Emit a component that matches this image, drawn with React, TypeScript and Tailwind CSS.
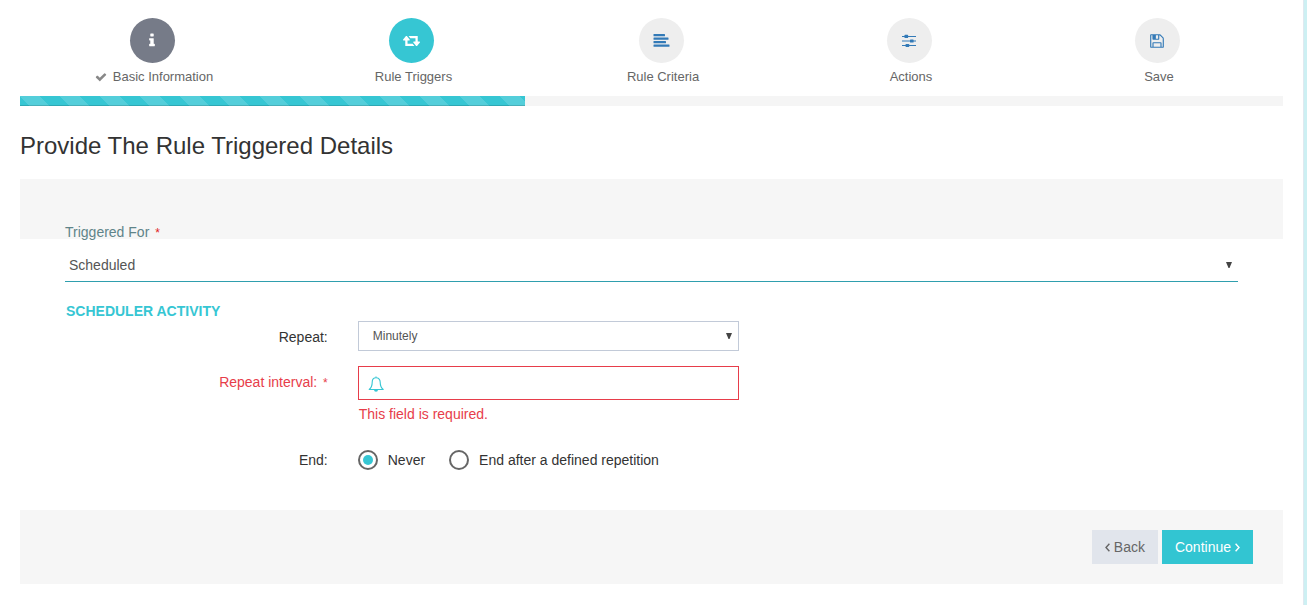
import { useState } from "react";
import type { ReactNode } from "react";

function Glyph({ d, className, box = "0 0 1792 1792" }: { d: string; className: string; box?: string }) {
  return (
    <svg viewBox={box} fill="currentColor" aria-hidden="true" className={className}>
      <path d={d} />
    </svg>
  );
}

const INFO =
  "M1216 1344v128q0 26-19 45t-45 19h-512q-26 0-45-19t-19-45v-128q0-26 19-45t45-19h64v-384h-64q-26 0-45-19t-19-45v-128q0-26 19-45t45-19h384q26 0 45 19t19 45v576h64q26 0 45 19t19 45zm-128-1152v192q0 26-19 45t-45 19h-256q-26 0-45-19t-19-45v-192q0-26 19-45t45-19h256q26 0 45 19t19 45z";
const RETWEET =
  "M1280 1504q0 13-9.5 22.5t-22.5 9.5h-960q-8 0-13.5-2t-9-7-5.5-8-3-11.5-1-11.5v-600h-192q-26 0-45-19t-19-45q0-24 15-41l320-384q19-22 49-22t49 22l320 384q15 17 15 41 0 26-19 45t-45 19h-192v384h576q16 0 25 11l160 192q7 11 7 21zm640-416q0 24-15 41l-320 384q-20 23-49 23t-49-23l-320-384q-15-17-15-41 0-26 19-45t45-19h192v-384h-576q-16 0-25-12l-160-192q-7-9-7-20 0-13 9.5-22.5t22.5-9.5h960q8 0 13.5 2t9 7 5.5 8 3 11.5 1 11.5v600h192q26 0 45 19t19 45z";
const FLOPPY =
  "M512 1536h768v-384h-768v384zm896 0h128v-896q0-14-10-38.5t-20-34.5l-281-281q-10-10-34-20t-39-10v416q0 40-28 68t-68 28h-576q-40 0-68-28t-28-68v-416h-128v1280h128v-416q0-40 28-68t68-28h832q40 0 68 28t28 68v416zm-384-928v-320q0-13-9.5-22.5t-22.5-9.5h-192q-13 0-22.5 9.5t-9.5 22.5v320q0 13 9.5 22.5t22.5 9.5h192q13 0 22.5-9.5t9.5-22.5zm640 32v928q0 40-28 68t-68 28h-1344q-40 0-68-28t-28-68v-1344q0-40 28-68t68-28h928q40 0 88 20t76 48l280 280q28 28 48 76t20 88z";
const CHECK =
  "M1671 566q0 40-28 68l-724 724-136 136q-28 28-68 28t-68-28l-136-136-362-362q-28-28-28-68t28-68l136-136q28-28 68-28t68 28l294 295 656-657q28-28 68-28t68 28l136 136q28 28 28 68z";

function AngleIcon({ d }: { d: string }) {
  return (
    <svg viewBox="0 0 5 9" fill="none" stroke="currentColor" strokeWidth="1.4" aria-hidden="true" className="h-[9px] w-[5px]">
      <path d={d} />
    </svg>
  );
}

function LinesIcon() {
  return (
    <svg viewBox="0 0 17 14" fill="currentColor" aria-hidden="true" className="h-3.5 w-[17px]">
      <rect x="0.5" y="0" width="11.5" height="2.3" rx="0.5" />
      <rect x="0.5" y="3.5" width="15" height="2.3" rx="0.5" />
      <rect x="0.5" y="7" width="12.5" height="2.3" rx="0.5" />
      <rect x="0.5" y="10.500" width="16" height="2.3" rx="0.5" />
    </svg>
  );
}

function EqualizerIcon() {
  return (
    <svg viewBox="0 0 14 14" fill="currentColor" aria-hidden="true" className="size-3.5">
      <rect x="0" y="2" width="14" height="1" />
      <rect x="0" y="6.500" width="14" height="1" />
      <rect x="0" y="11" width="14" height="1" />
      <rect x="2.500" y="0.800" width="3.600" height="3.200" rx="0.6" />
      <rect x="8" y="5.400" width="3.600" height="3.200" rx="0.6" />
      <rect x="3.600" y="9.900" width="3.600" height="3.200" rx="0.6" />
    </svg>
  );
}

function BellIcon() {
  return (
    <svg viewBox="0 0 16 17" fill="none" stroke="currentColor" aria-hidden="true" className="h-[17px] w-4">
      <path d="M8 0.5v1.3M8 1.8C5.400 1.800 4.200 3.600 4.200 6.200 4.200 10 3.200 11.800 1.200 13.500h14C13.200 11.800 12.200 10 12.200 6.200 12.200 3.600 10.800 1.800 8 1.800Z" strokeWidth="1.1" strokeLinejoin="round" />
      <path d="M6 13.800a2 2 0 0 0 4 0Z" fill="currentColor" stroke="none" />
    </svg>
  );
}

type Step = { label: string; icon: ReactNode; circle: string; done?: boolean };

const steps: Step[] = [
  { label: "Basic Information", icon: <Glyph d={INFO} box="0 64 1792 1792" className="size-4" />, circle: "bg-[#767b88] text-white", done: true },
  { label: "Rule Triggers", icon: <Glyph d={RETWEET} box="0 64 1920 1792" className="h-4 w-[17px]" />, circle: "bg-[#36c6d3] text-white" },
  { label: "Rule Criteria", icon: <LinesIcon />, circle: "bg-[#eeeeee] text-[#337ab7]" },
  { label: "Actions", icon: <EqualizerIcon />, circle: "bg-[#eeeeee] text-[#337ab7]" },
  { label: "Save", icon: <Glyph d={FLOPPY} className="size-4" />, circle: "bg-[#eeeeee] text-[#337ab7]" },
];

function Arrow({ className }: { className: string }) {
  return (
    <svg viewBox="0 0 6 6" fill="#444444" aria-hidden="true" className={`pointer-events-none absolute size-1.5 ${className}`}>
      <path d="M0 0h6L3.500 6h-1Z" />
    </svg>
  );
}

const radio =
  "m-0 grid size-5 shrink-0 appearance-none place-content-center rounded-full border-2 border-[#666666] before:size-2.5 before:rounded-full before:content-[''] checked:before:bg-[#36c6d3]";

export default function App() {
  const [end, setEnd] = useState("never");
  return (
    <div className="flex min-h-screen bg-white font-['Liberation_Sans',Arial,sans-serif] text-sm text-[#333333]">
      <main className="min-w-0 flex-1 pt-[18px] pr-5 pb-5 pl-5">
        <nav aria-label="Progress">
          <ol className="grid grid-cols-[268fr_251fr_248fr_248fr_248fr]">
            {steps.map((s) => (
              <li key={s.label}>
                <a href="#" className="flex flex-col items-center text-[13px] text-[#666666]">
                  <span className={`mr-1 flex size-[45px] items-center justify-center rounded-full ${s.circle}`}>{s.icon}</span>
                  <span className="mt-1 flex items-center gap-1.5 leading-5">
                    {s.done && <Glyph d={CHECK} className="size-3 text-[#888888]" />}
                    {s.label}
                  </span>
                </a>
              </li>
            ))}
          </ol>
        </nav>
        <div role="progressbar" aria-valuenow={40} aria-valuemin={0} aria-valuemax={100} aria-label="Wizard progress" className="mt-[9px] h-2.5 bg-[#f5f5f5]">
          <div className="h-full w-2/5 bg-[#36c6d3] bg-[linear-gradient(45deg,rgba(255,255,255,.15)_25%,transparent_25%,transparent_50%,rgba(255,255,255,.15)_50%,rgba(255,255,255,.15)_75%,transparent_75%,transparent)] bg-[length:40px_40px] shadow-[inset_0_-1px_0_rgba(0,0,0,0.15)]" />
        </div>

        <h1 className="mt-6 text-2xl leading-8">Provide The Rule Triggered Details</h1>

        <form className="mt-[17px]" onSubmit={(e) => e.preventDefault()}>
          <div className="flex h-[60px] items-end bg-[#f6f6f6] px-[45px]">
            <label htmlFor="triggered" className="leading-[10px] text-[#5f8489]">
              Triggered For <span className="ml-0.5 text-xs leading-none text-[#e02222]">*</span>
            </label>
          </div>

          <div className="px-[45px] pt-[9px]">
            <div className="relative">
              <select id="triggered" className="block h-[34px] w-full appearance-none border-b border-[#2f9fae] bg-white px-1 text-[#555555]">
                <option>Scheduled</option>
              </select>
              <Arrow className="top-3.5 right-1.5" />
            </div>

            <h2 className="mt-[19px] pl-px leading-5 font-bold text-[#36c6d3]">SCHEDULER ACTIVITY</h2>

            <div className="grid grid-cols-[22.4%_32.5%] gap-x-[30px] gap-y-[15px]">
              <label htmlFor="repeat" className="pt-1.5 text-right leading-5">Repeat:</label>
              <div className="relative">
                <select id="repeat" className="block h-[30px] w-full appearance-none border border-[#c2cad8] bg-white px-3.5 text-xs text-[#555555]">
                  <option>Minutely</option>
                </select>
                <Arrow className="top-3 right-[7px]" />
              </div>

              <label htmlFor="interval" className="pt-1.5 text-right leading-5 text-[#e73d4a]">
                Repeat interval: <span className="ml-0.5 text-xs">*</span>
              </label>
              <div>
                <div className="relative">
                  <input id="interval" type="text" aria-invalid="true" aria-describedby="interval-error" className="block h-[34px] w-full border border-[#e73d4a] bg-white pr-3 pl-[33px] text-[#555555]" />
                  <span className="pointer-events-none absolute top-2.5 left-2.5 text-[#36c6d3]">
                    <BellIcon />
                  </span>
                </div>
                <p id="interval-error" className="mt-1 pl-px leading-5 text-[#e73d4a]">This field is required.</p>
              </div>
            </div>

            <div role="radiogroup" aria-labelledby="end-label" className="mt-[26px] grid grid-cols-[22.4%_1fr] gap-x-[30px] leading-5">
              <span id="end-label" className="text-right">End:</span>
              <div className="flex items-center gap-6">
                <label className="flex items-center gap-2.5">
                  <input type="radio" name="end" checked={end === "never"} onChange={() => setEnd("never")} className={radio} />
                  Never
                </label>
                <label className="flex items-center gap-2.5">
                  <input type="radio" name="end" checked={end === "after"} onChange={() => setEnd("after")} className={radio} />
                  End after a defined repetition
                </label>
              </div>
            </div>
          </div>

          <div className="mt-10 flex justify-end gap-1 bg-[#f6f6f6] px-[30px] py-5">
            <button type="button" className="flex h-[34px] items-center gap-1 bg-[#e1e5ec] px-[13px] text-[#666666]">
              <AngleIcon d="M4.400 0.700 1 4.500l3.400 3.800" />
              Back
            </button>
            <button type="submit" className="flex h-[34px] items-center gap-1 bg-[#32c5d2] px-[13px] text-white">
              Continue
              <AngleIcon d="M0.600 0.700 4 4.500 0.600 8.300" />
            </button>
          </div>
        </form>
      </main>
      <div aria-hidden="true" className="w-1 shrink-0 border-l border-[#dfe9f0] bg-[#cdf0f3]" />
    </div>
  );
}
